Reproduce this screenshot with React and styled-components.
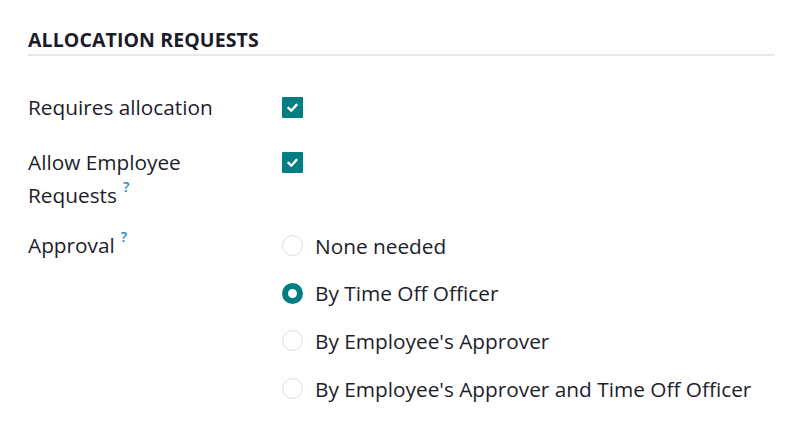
import React from "react";
import styled, { createGlobalStyle } from "styled-components";

const Global = createGlobalStyle`
  html, body { margin: 0; padding: 0; background: #fff; }
  body { font-family: "Open Sans", "Noto Sans", sans-serif; color: #1d1d2c; }
`;

const Page = styled.div`
  width: 800px;
  height: 442px;
  padding: 28px 25px 0 28px;
  box-sizing: border-box;
  overflow: hidden;
`;

const SectionTitle = styled.div`
  font-size: 19.5px;
  font-weight: 700;
  line-height: 24px;
  letter-spacing: 0.1px;
  color: #1b1b2b;
  padding-bottom: 2px;
  border-bottom: 2px solid #e7e7e7;
`;

const Form = styled.div`
  display: grid;
  grid-template-columns: 254px 1fr;
  padding-top: 35px;
`;

const Label = styled.div`
  font-size: 20.8px;
  font-weight: 450;
  line-height: 33px;
  width: 210px;
  margin-bottom: ${(p) => p.$mb || 0}px;
`;

const Field = styled.div`
  display: flex;
  flex-direction: column;
  gap: 14.7px;
  margin-bottom: ${(p) => p.$mb || 0}px;
`;

const Help = styled.sup`
  display: inline-block;
  color: #1b8cb3;
  font-size: 14px;
  font-weight: 600;
  line-height: 14px;
  margin-left: 6px;
  vertical-align: 11px;
`;

const CheckLine = styled.div`
  height: 33px;
  display: flex;
  align-items: center;
`;

const Checkbox = styled.span`
  width: 21px;
  height: 21px;
  background: #017e84;
  border-radius: 1px;
  display: inline-flex;
  align-items: center;
  justify-content: center;
`;

const RadioLine = styled.label`
  height: 33px;
  display: flex;
  align-items: center;
  gap: 12px;
  font-size: 20.8px;
  font-weight: 450;
`;

const Radio = styled.span`
  width: 21px;
  height: 21px;
  box-sizing: border-box;
  border-radius: 50%;
  flex: none;
  border: ${(p) => (p.$checked ? "6.5px solid #017e84" : "1.5px solid #dcdcdc")};
  background: #fff;
`;

const Check = () => (
  <Checkbox>
    <svg width="13" height="13" viewBox="0 0 16 16">
      <path d="M3 8.5 L6.5 12 L13 4.8" fill="none" stroke="#fff" strokeWidth="3" strokeLinecap="round" strokeLinejoin="round" />
    </svg>
  </Checkbox>
);

const options = [
  "None needed",
  "By Time Off Officer",
  "By Employee's Approver",
  "By Employee's Approver and Time Off Officer",
];

export default function App() {
  return (
    <Page>
      <Global />
      <SectionTitle>ALLOCATION REQUESTS</SectionTitle>
      <Form>
        <Label $mb={22}>Requires allocation</Label>
        <Field $mb={22}>
          <CheckLine><Check /></CheckLine>
        </Field>
        <Label $mb={17}>
          Allow Employee Requests<Help>?</Help>
        </Label>
        <Field $mb={17}>
          <CheckLine><Check /></CheckLine>
        </Field>
        <Label>
          Approval<Help>?</Help>
        </Label>
        <Field>
          {options.map((o, i) => (
            <RadioLine key={o}>
              <Radio $checked={i === 1} />
              {o}
            </RadioLine>
          ))}
        </Field>
      </Form>
    </Page>
  );
}
